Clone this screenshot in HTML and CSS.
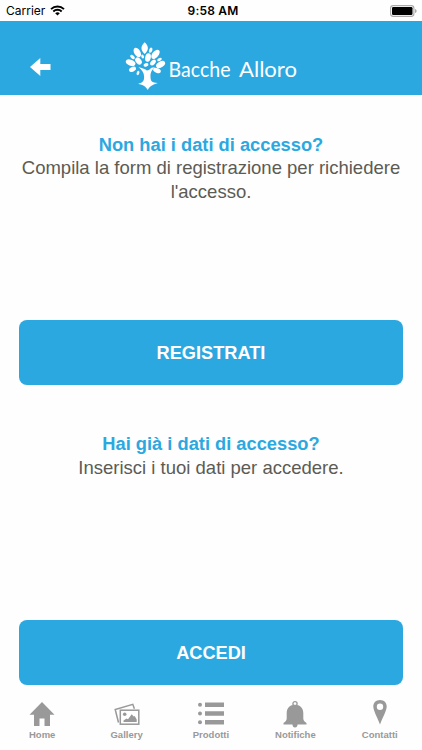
FILE: index.html
```
<!DOCTYPE html>
<html lang="it">
<head>
    <meta charset="UTF-8">
    <meta name="viewport" content="width=device-width, initial-scale=1">
    <title>Bacche Alloro</title>
    <link rel="stylesheet" href="styles.css">
</head>
<body>
    <div class="status-bar">
        <div class="carrier">
            <span>Carrier</span>
            <svg width="15" height="11" viewBox="0 0 15 11">
                <path d="M1 4.1a9.4 9.4 0 0 1 13 0M3.3 6.5a6 6 0 0 1 8.4 0" fill="none" stroke="#000" stroke-width="1.9"/>
                <path d="M7.5 10.6 5.2 8.3a3.3 3.3 0 0 1 4.6 0z"/>
            </svg>
        </div>
        <div class="time">9:58 AM</div>
        <svg class="battery" width="27" height="12" viewBox="0 0 27 12">
            <rect x=".6" y=".6" width="23.3" height="10.8" rx="2.6" fill="#fff" stroke="#aaa" stroke-width="1.1"/>
            <rect x="2" y="2" width="20.5" height="8" rx="1.2"/>
            <path d="M25 4v4c1-.3 1.6-1 1.6-2S26 4.300 25 4z" fill="#aaa"/>
        </svg>
    </div>

    <header class="header">
        <a class="back" href="#" aria-label="Indietro">
            <svg width="21" height="18" viewBox="0 0 21 18">
                <path d="M0 9 10.300 0v6H20.500v6H10.300v6z" fill="#fff"/>
            </svg>
        </a>
        <svg class="logo" width="190" height="50" viewBox="0 0 190 50">
            <g fill="#fff">
                <path d="M19.700.3c4.300 4.200 4.300 7.700 0 11.700-4.300-4-4.300-7.500 0-11.700z"/>
                <ellipse cx="12.300" cy="10.500" rx="3.100" ry="5.200" transform="rotate(-30 12.300 10.500)"/>
                <ellipse cx="30.500" cy="12.300" rx="3.100" ry="5.400" transform="rotate(40 30.500 12.300)"/>
                <ellipse cx="5.600" cy="20.700" rx="2.900" ry="5" transform="rotate(-68 5.600 20.700)"/>
                <ellipse cx="35.600" cy="22.500" rx="2.900" ry="4.900" transform="rotate(60 35.600 22.500)"/>
                <ellipse cx="7.500" cy="15" rx="1.600" ry="2.700" transform="rotate(-50 7.500 15)"/>
                <ellipse cx="13.500" cy="19" rx="2.700" ry="4" transform="rotate(-40 13.500 19)"/>
                <ellipse cx="25.700" cy="8.200" rx="1.600" ry="2.700" transform="rotate(20 25.700 8.200)"/>
                <ellipse cx="23" cy="15.500" rx="2.800" ry="4.300" transform="rotate(12 23 15.500)"/>
                <ellipse cx="17.600" cy="14.500" rx="1.300" ry="2.100" transform="rotate(-15 17.600 14.500)"/>
                <ellipse cx="34.500" cy="17.500" rx="1.400" ry="2.500" transform="rotate(60 34.500 17.500)"/>
                <ellipse cx="28" cy="20.500" rx="2.100" ry="3.500" transform="rotate(42 28 20.500)"/>
                <ellipse cx="7.500" cy="27.300" rx="2.300" ry="3.700" transform="rotate(65 7.500 27.300)"/>
                <ellipse cx="32" cy="28.500" rx="2.300" ry="4" transform="rotate(-68 32 28.500)"/>
                <ellipse cx="13" cy="31" rx="1.300" ry="2.200" transform="rotate(20 13 31)"/>
                <ellipse cx="21" cy="22.800" rx="2.500" ry="1.700" transform="rotate(-20 21 22.800)"/>
                <path d="M13.500 25c2.700 1.500 6.500 1.300 8.300 3.500 2-.1 3-1.400 4.700-2.800l3.500-.5c-3.700 3-4.700 5.800-4.500 9.800.2 4.500 1.300 5.500 7.300 6-3.600 1.800-7.400 1.600-10 7-2.600-4.700-6-5-9.600-6.200 5-1.300 6-3 5.900-7.300-.1-4-2.100-6.100-5.600-9.500z"/>
            </g>
            <text class="logo-text" y="35"><tspan x="43.500" textLength="62" lengthAdjust="spacingAndGlyphs">Bacche</tspan> <tspan x="114" textLength="58" lengthAdjust="spacingAndGlyphs">Alloro</tspan></text>
        </svg>
    </header>

    <main class="content">
        <section class="block">
            <div class="message">
                <h2>Non hai i dati di accesso?</h2>
                <p>Compila la form di registrazione per richiedere l'accesso.</p>
            </div>
            <a class="button" href="#">REGISTRATI</a>
        </section>
        <section class="block">
            <div class="message">
                <h2>Hai già i dati di accesso?</h2>
                <p>Inserisci i tuoi dati per accedere.</p>
            </div>
            <a class="button" href="#">ACCEDI</a>
        </section>
    </main>

    <nav class="tab-bar">
        <a class="tab" href="#">
            <svg width="28" height="28" viewBox="0 0 28 28">
                <path d="M14 2 1.500 14.700H6V26h5.500v-7.500h5V26H22V14.700h4.500z"/>
            </svg>
            <span>Home</span>
        </a>
        <a class="tab" href="#">
            <svg width="28" height="28" viewBox="0 0 28 28">
                <path d="m5.500 22.500-3.300-13 17.600-5.200 1.600 4.500" fill="none" stroke="#999" stroke-width="1.500"/>
                <rect x="7.300" y="10.200" width="18.500" height="14" fill="#fff" stroke="#999" stroke-width="1.500"/>
                <circle cx="11.700" cy="14.300" r="1.800"/>
                <path d="M10.500 22v-1.500l3-2 1.500.8 3.700-5 2 2.200 1-.6 2 3.600V22z"/>
            </svg>
            <span>Gallery</span>
        </a>
        <a class="tab" href="#">
            <svg width="28" height="28" viewBox="0 0 28 28">
                <circle cx="3" cy="4.700" r="2"/>
                <circle cx="3" cy="13.500" r="2"/>
                <circle cx="3" cy="22.300" r="2"/>
                <path d="M8 2.500h19v4.400H8zM8 11.300h19v4.400H8zM8 20.100h19v4.400H8z"/>
            </svg>
            <span>Prodotti</span>
        </a>
        <a class="tab" href="#">
            <svg width="28" height="28" viewBox="0 0 28 28">
                <circle cx="14" cy="3.800" r="2.100" fill="none" stroke="#999" stroke-width="1.300"/>
                <path d="M14 4.800c5 0 8.300 3.300 8.300 8.200v5.500c0 2 1.200 3.200 3.200 4.400v1.700h-9c0 1.900-1 3-2.500 3s-2.500-1.100-2.500-3h-9v-1.700c2-1.200 3.200-2.400 3.200-4.400V13c0-4.900 3.300-8.200 8.300-8.200z"/>
            </svg>
            <span>Notifiche</span>
        </a>
        <a class="tab" href="#">
            <svg width="28" height="28" viewBox="0 0 28 28">
                <path fill-rule="evenodd" d="M14 0c4 0 6.700 2.800 6.700 6.600 0 4-3.500 9.700-6.700 18-3.200-8.300-6.700-14-6.700-18C7.300 2.800 10 0 14 0zm0 3.500a3.200 3.200 0 1 0 0 6.400 3.200 3.200 0 0 0 0-6.400z"/>
            </svg>
            <span>Contatti</span>
        </a>
    </nav>
</body>
</html>
```
FILE: styles.css
```
:root {
    --primary-color: #2ca8e1;
    --text-color: #5c5b54;
    --tab-color: #999;
}
* {
    box-sizing: border-box;
}
body {
    margin: 0;
    height: 750px;
    display: flex;
    flex-direction: column;
    overflow: hidden;
    background-color: #fefefe;
    color: var(--text-color);
    font-family: "Liberation Sans", Arial, Helvetica, sans-serif;
}
a {
    text-decoration: none;
}
svg {
    display: block;
    flex-shrink: 0;
}
.status-bar {
    height: 21px;
    flex-shrink: 0;
    padding: 0 5px 0 6px;
    display: grid;
    grid-template-columns: 1fr auto 1fr;
    align-items: center;
    color: #000;
    font-family: Inter, sans-serif;
    font-size: 12px;
}
.carrier {
    display: flex;
    align-items: center;
    gap: 5px;
}
.time {
    padding-left: 3px;
    font-weight: 600;
    font-size: 12px;
    letter-spacing: 0.2px;
}
.battery {
    justify-self: end;
}
.header {
    height: 74px;
    flex-shrink: 0;
    display: flex;
    padding-left: 30px;
    background-color: var(--primary-color);
}
.back {
    padding-top: 37px;
    width: 95px;
}
.logo {
    margin-top: 21px;
}
.logo-text {
    fill: #fff;
    font-family: Lato, sans-serif;
    font-size: 21.5px;
}
.content {
    padding: 37px 16px 0;
}
.block {
    margin-bottom: 46.5px;
}
.block:last-child {
    margin-bottom: 0;
}
.message {
    height: 188.4px;
    padding-top: 0.5px;
    font-size: 18.5px;
    line-height: 23.5px;
    text-align: center;
}
.message h2 {
    margin: 0;
    color: var(--primary-color);
    font-size: 18.3px;
}
.message p {
    margin: 0;
}
.button {
    height: 65px;
    margin: 0 3px;
    padding-top: 1px;
    display: flex;
    align-items: center;
    justify-content: center;
    border-radius: 8px;
    background-color: var(--primary-color);
    color: #fff;
    font-size: 18.2px;
    font-weight: bold;
}
.tab-bar {
    height: 50px;
    flex-shrink: 0;
    margin-top: auto;
    display: grid;
    grid-template-columns: repeat(5, 84.4px);
}
.tab {
    display: flex;
    flex-direction: column;
    align-items: center;
    color: var(--tab-color);
    font-size: 9.5px;
    font-weight: bold;
    line-height: 12px;
}
.tab svg {
    fill: var(--tab-color);
    overflow: visible;
}
.tab span {
    margin-top: 1px;
}
```
